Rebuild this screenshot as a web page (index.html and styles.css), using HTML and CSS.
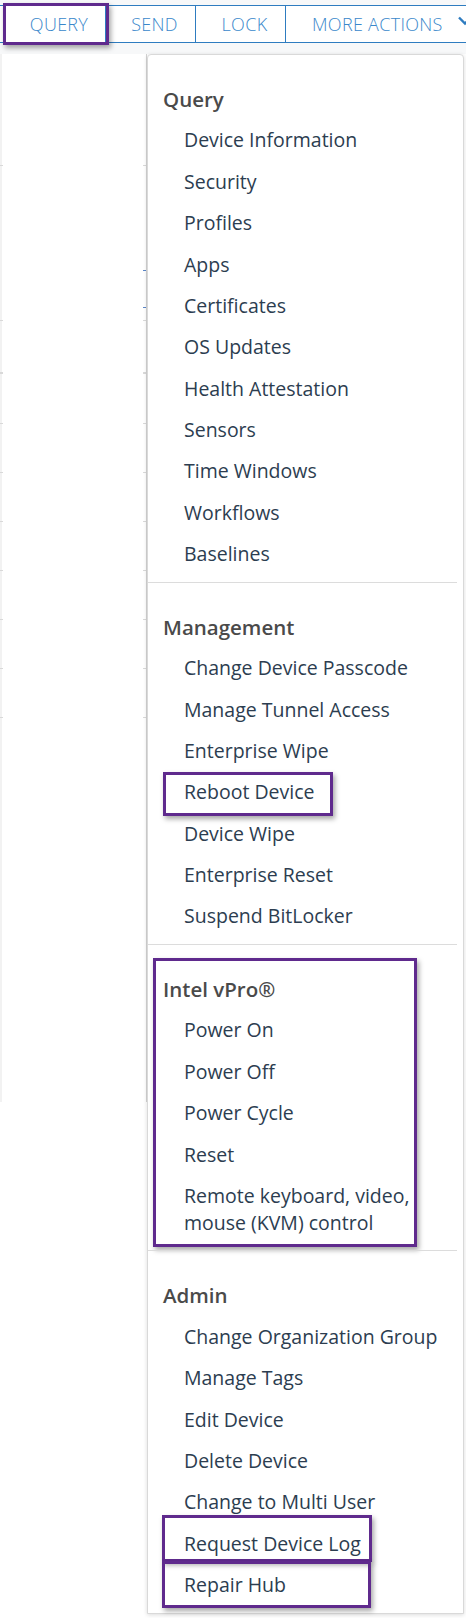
FILE: index.html
```html
<!DOCTYPE html>
<html lang="en">
<head>
<meta charset="utf-8">
<title>Device actions</title>
<link rel="stylesheet" href="styles.css">
</head>
<body>
<div class="topbar">
  <div class="toolbar">
    <div class="tb-btn tb-query hl-query">QUERY</div>
    <div class="tb-btn">SEND</div>
    <div class="tb-btn">LOCK</div>
    <div class="tb-btn tb-more">MORE ACTIONS
      <svg class="chev" width="16" height="12" viewBox="0 0 16 12"><path d="M2 2.5 L8 8.5 L14 2.5" fill="none" stroke="#2e7cc0" stroke-width="2.4"/></svg>
    </div>
  </div>
</div>
<div class="main">
  <div class="bg-col">
    <div class="bg-row r-112"></div>
    <div class="bg-row blue r-105"></div>
    <div class="bg-row blue r-37"></div>
    <div class="bg-row r-13"></div>
    <div class="bg-row r-53 thick"></div>
    <div class="bg-row r-50"></div>
    <div class="bg-row"></div>
    <div class="bg-row"></div>
    <div class="bg-row"></div>
    <div class="bg-row"></div>
    <div class="bg-row"></div>
    <div class="bg-row"></div>
  </div>
  <div class="menu">
    <div class="group">
      <div class="group-title">Query</div>
      <div class="item">Device Information</div>
      <div class="item">Security</div>
      <div class="item">Profiles</div>
      <div class="item">Apps</div>
      <div class="item">Certificates</div>
      <div class="item">OS Updates</div>
      <div class="item">Health Attestation</div>
      <div class="item">Sensors</div>
      <div class="item">Time Windows</div>
      <div class="item">Workflows</div>
      <div class="item">Baselines</div>
    </div>
    <div class="group">
      <div class="group-title">Management</div>
      <div class="item">Change Device Passcode</div>
      <div class="item">Manage Tunnel Access</div>
      <div class="item">Enterprise Wipe</div>
      <div class="item hl-reboot">Reboot Device</div>
      <div class="item">Device Wipe</div>
      <div class="item">Enterprise Reset</div>
      <div class="item">Suspend BitLocker</div>
    </div>
    <div class="group hl-vpro">
      <div class="group-title">Intel vPro®</div>
      <div class="item">Power On</div>
      <div class="item">Power Off</div>
      <div class="item">Power Cycle</div>
      <div class="item">Reset</div>
      <div class="item">Remote keyboard, video, mouse (KVM) control</div>
    </div>
    <div class="group">
      <div class="group-title">Admin</div>
      <div class="item">Change Organization Group</div>
      <div class="item">Manage Tags</div>
      <div class="item">Edit Device</div>
      <div class="item">Delete Device</div>
      <div class="item">Change to Multi User</div>
      <div class="item hl-request">Request Device Log</div>
      <div class="item hl-repair">Repair Hub</div>
    </div>
  </div>
</div>
</body>
</html>
```

FILE: styles.css
```css
*, *::before, *::after { box-sizing: border-box; }

html, body {
  margin: 0;
  padding: 0;
}

body {
  width: 466px;
  height: 1618px;
  overflow: hidden;
  background: #ffffff;
  font-family: "Open Sans", "Noto Sans", sans-serif;
}

/* ---------- top toolbar ---------- */
.topbar {
  background: #f7f8f9;
  padding-top: 5px;
  padding-bottom: 11px;
}

.toolbar {
  display: flex;
  height: 38px;
  padding-left: 4px;
  border-top: 1px solid #2e7cc0;
  border-bottom: 1px solid #2e7cc0;
  background: #ffffff;
  white-space: nowrap;
}

.tb-btn {
  position: relative;
  flex: none;
  width: 90px;
  padding-left: 8px;
  border-left: 1px solid #2e7cc0;
  text-align: center;
  color: #3a88cb;
  font-size: 18px;
  font-weight: 300;
  letter-spacing: 0.3px;
  line-height: 36px;
}

.tb-query { width: 101px; }

.tb-more {
  width: auto;
  padding-left: 26px;
  text-align: left;
  display: flex;
  align-items: center;
  gap: 14px;
}

.chev { flex: none; margin-top: -6px; }

/* ---------- page body ---------- */
.main {
  display: flex;
  align-items: flex-start;
}

.bg-col {
  flex: none;
  width: 147px;
  height: 1048px;
  border-right: 1px solid #d4d4d4;
  background: linear-gradient(to right, #f2f2f2 0 2px, #ffffff 2px);
}

.bg-row {
  height: 49px;
  background:
    linear-gradient(to right, #d9d9d9 0 3px, transparent 3px calc(100% - 3px), #d9d9d9 calc(100% - 3px)) bottom / 100% 1px no-repeat;
}

.bg-row.blue {
  background:
    linear-gradient(to right, transparent calc(100% - 3px), #5b86c8 calc(100% - 3px)) bottom / 100% 1px no-repeat;
}

.r-112 { height: 112px; }
.r-105 { height: 105px; }
.r-37 { height: 37px; }
.r-13 { height: 13px; }
.r-53 { height: 53px; }
.r-50 { height: 50px; }
.thick { background-size: 100% 2px; }

/* ---------- dropdown menu ---------- */
.menu {
  flex: none;
  width: 317px;
  background: #ffffff;
  border: 1px solid #d9d9d9;
  border-radius: 4px 4px 0 0;
  box-shadow: 0 1px 4px rgba(0, 0, 0, 0.14);
}

.group {
  position: relative;
  margin-right: 6px;
  padding: 31px 0 7.3px;
}

.group + .group {
  border-top: 1px solid #dcdcdc;
}

.group-title {
  padding: 0 0 6.3px 15px;
  font-size: 20.5px;
  font-weight: 600;
  line-height: 27px;
  color: #4a4a4a;
}

.item {
  position: relative;
  padding: 7.2px 8px 7.2px 36px;
  font-size: 19.5px;
  line-height: 27px;
  color: #2c3d50;
}

/* ---------- purple annotation boxes ---------- */
.hl-query::after,
.hl-reboot::after,
.hl-vpro::after,
.hl-request::after,
.hl-repair::after {
  content: "";
  position: absolute;
  border: 3px solid #5f2a8d;
  box-shadow: 2px 3px 5px rgba(0, 0, 0, 0.35);
  pointer-events: none;
}

.hl-query::after { left: -2px; top: -3px; width: 106px; height: 42px; }
.hl-reboot::after { left: 15px; top: 1px; width: 170px; height: 44px; }
.hl-vpro::after { left: 5px; top: 13px; width: 264px; height: 289px; }
.hl-request::after { left: 14px; top: -8px; width: 210px; height: 47px; }
.hl-repair::after { left: 14px; top: -3px; width: 209px; height: 47px; }
```
